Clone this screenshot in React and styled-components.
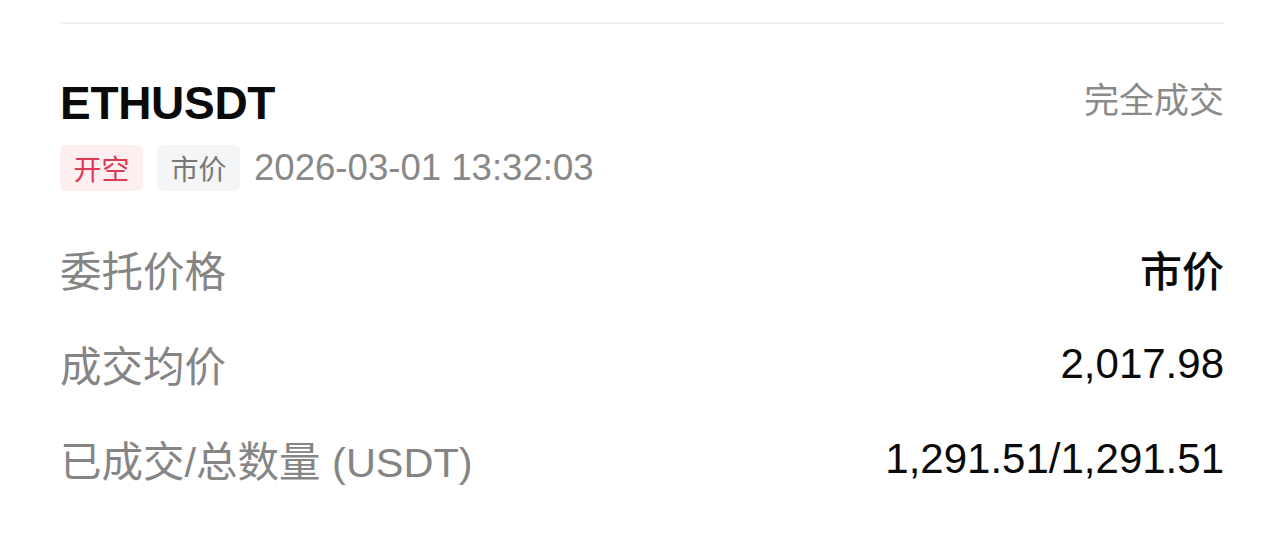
import React from 'react';
import styled, { createGlobalStyle } from 'styled-components';

const GlobalStyle = createGlobalStyle`
  html, body {
    margin: 0;
    padding: 0;
    background: #ffffff;
  }
  body {
    font-family: "Liberation Sans", "Noto Sans CJK SC", sans-serif;
    -webkit-font-smoothing: antialiased;
  }
`;

const Page = styled.div`
  width: 1284px;
  height: 534px;
  box-sizing: border-box;
  padding: 22px 60px 0;
  background: #ffffff;
  overflow: hidden;
`;

const Divider = styled.div`
  height: 2px;
  background: #f2f2f2;
`;

const Card = styled.div`
  padding-top: 51px;
`;

const Header = styled.div`
  display: flex;
  justify-content: space-between;
  align-items: flex-start;
`;

const Symbol = styled.div`
  font-size: 46px;
  line-height: 56px;
  font-weight: 700;
  color: #0a0a0a;
  letter-spacing: -0.3px;
`;

const Status = styled.div`
  font-size: 35px;
  line-height: 52px;
  color: #8a8a8a;
`;

const Meta = styled.div`
  display: flex;
  align-items: center;
  gap: 14px;
  margin-top: 14px;
`;

const Tag = styled.span`
  display: inline-flex;
  align-items: center;
  justify-content: center;
  width: 83px;
  height: 46px;
  border-radius: 6px;
  font-size: 28px;
  background: ${p => (p.$tone === 'red' ? '#fdeef0' : '#f4f5f6')};
  color: ${p => (p.$tone === 'red' ? '#dd3a55' : '#777777')};
`;

const Time = styled.span`
  font-size: 36.6px;
  color: #888888;
`;

const Rows = styled.div`
  margin-top: 30px;
  display: flex;
  flex-direction: column;
`;

const Row = styled.div`
  display: flex;
  justify-content: space-between;
  align-items: center;
  height: 95px;
`;

const Label = styled.span`
  font-size: 41.5px;
  color: #858585;
`;

const Value = styled.span`
  font-size: 42px;
  color: #0a0a0a;
  font-weight: ${p => (p.$bold ? 500 : 400)};
`;

const rows = [
  { label: '委托价格', value: '市价', bold: true },
  { label: '成交均价', value: '2,017.98' },
  { label: '已成交/总数量 (USDT)', value: '1,291.51/1,291.51' },
];

export default function App() {
  return (
    <>
      <GlobalStyle />
      <Page>
        <Divider />
        <Card>
          <Header>
            <Symbol>ETHUSDT</Symbol>
            <Status>完全成交</Status>
          </Header>
          <Meta>
            <Tag $tone="red">开空</Tag>
            <Tag>市价</Tag>
            <Time>2026-03-01 13:32:03</Time>
          </Meta>
          <Rows>
            {rows.map(r => (
              <Row key={r.label}>
                <Label>{r.label}</Label>
                <Value $bold={r.bold}>{r.value}</Value>
              </Row>
            ))}
          </Rows>
        </Card>
      </Page>
    </>
  );
}
